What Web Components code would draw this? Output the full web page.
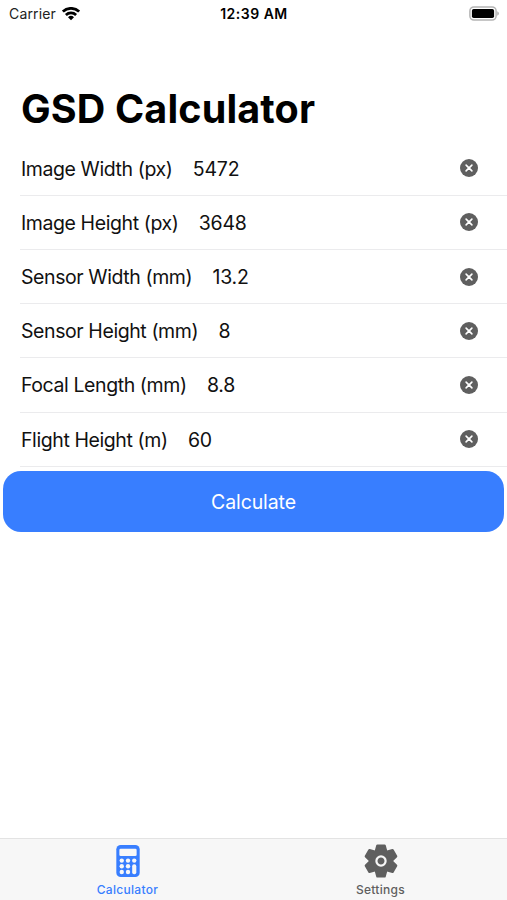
<!DOCTYPE html>
<html lang="en">
<head>
<meta charset="utf-8">
<title>GSD Calculator</title>
<style>
  html, body {
    height: 100%;
    margin: 0;
    overflow: hidden;
  }
  body {
    background: #fff;
    color: #000;
    font-family: Inter, "Liberation Sans", sans-serif;
  }
</style>
</head>
<body>

<gsd-app>
  <status-bar slot="status" carrier="Carrier" time="12:39 AM"></status-bar>
  <span slot="title">GSD Calculator</span>
  <number-field label="Image Width (px)" value="5472"></number-field>
  <number-field label="Image Height (px)" value="3648"></number-field>
  <number-field label="Sensor Width (mm)" value="13.2"></number-field>
  <number-field label="Sensor Height (mm)" value="8"></number-field>
  <number-field label="Focal Length (mm)" value="8.8"></number-field>
  <number-field label="Flight Height (m)" value="60"></number-field>
  <block-button>Calculate</block-button>
  <tab-button slot="tabs" selected>
    <svg slot="icon" viewBox="0 0 512 512" width="34" height="34">
      <rect fill="currentColor" x="80" y="14" width="352" height="484" rx="66"/>
      <g fill="#f7f7f7">
        <rect x="126" y="70" width="260" height="112" rx="20"/>
        <circle cx="162" cy="250" r="33"/><circle cx="256" cy="250" r="33"/><circle cx="350" cy="250" r="33"/>
        <circle cx="162" cy="336" r="33"/><circle cx="256" cy="336" r="33"/>
        <circle cx="162" cy="422" r="33"/><circle cx="256" cy="422" r="33"/>
        <rect x="319" y="306" width="62" height="149" rx="28"/>
      </g>
    </svg>
    Calculator
  </tab-button>
  <tab-button slot="tabs">
    <svg slot="icon" viewBox="-18 -18 36 36" width="36" height="36">
      <g fill="currentColor" stroke="currentColor" stroke-width="2.4" stroke-linejoin="round">
        <path d="M-3.6-15.4h7.2L5-10.2V10.2L3.6 15.4h-7.2L-5 10.2V-10.2z"/>
        <path transform="rotate(60)" d="M-3.6-15.4h7.2L5-10.2V10.2L3.6 15.4h-7.2L-5 10.2V-10.2z"/>
        <path transform="rotate(120)" d="M-3.6-15.4h7.2L5-10.2V10.2L3.6 15.4h-7.2L-5 10.2V-10.2z"/>
      </g>
      <circle r="4.6" fill="currentColor" stroke="#f7f7f7" stroke-width="2.2"/>
    </svg>
    Settings
  </tab-button>
</gsd-app>

<template id="gsd-app-template">
  <style>
    :host {
      display: flex;
      flex-direction: column;
      height: 100vh;
    }
    h1 {
      margin: 57px 0 0 21px;
      height: 57.6px;
      line-height: 50px;
      font-size: 39.5px;
      font-weight: 700;
      letter-spacing: 0.15px;
      white-space: nowrap;
    }
    main {
      flex: 1;
      display: flex;
      flex-direction: column;
    }
    nav {
      display: flex;
      box-sizing: border-box;
      height: 62px;
      padding-left: 1px;
      border-top: 1px solid #e3e3e3;
      background: #f7f7f7;
    }
  </style>
  <slot name="status"></slot>
  <h1><slot name="title"></slot></h1>
  <main><slot></slot></main>
  <nav><slot name="tabs"></slot></nav>
</template>

<template id="status-bar-template">
  <style>
    :host {
      display: grid;
      grid-template-columns: 1fr auto 1fr;
      align-items: center;
      height: 27px;
      padding: 0 8px 0 9px;
      font-size: 14px;
    }
    .left {
      display: flex;
      align-items: center;
      gap: 6px;
      color: #222;
    }
    .carrier {
      letter-spacing: 0.15px;
    }
    .time {
      font-weight: 600;
      letter-spacing: 0.5px;
    }
    .battery {
      justify-self: end;
    }
    svg {
      display: block;
    }
  </style>
  <div class="left">
    <span class="carrier"></span>
    <svg width="18" height="14" viewBox="0 0 18 14">
      <path fill="none" stroke="#000" stroke-width="2.7" d="M.9 4.6a11.6 11.6 0 0116.2 0M3.9 8a7.3 7.3 0 0110.2 0"/>
      <path d="M9 13.3L6 10.3a4.3 4.3 0 016 0z"/>
    </svg>
  </div>
  <span class="time"></span>
  <svg class="battery" width="30" height="15" viewBox="0 0 30 15">
    <rect x=".9" y=".9" width="26.2" height="13.2" rx="4" fill="#fff" stroke="#b4b4b4" stroke-width="1.5"/>
    <rect x="2.9" y="3" width="22.2" height="9" rx="1.8"/>
    <path fill="#b4b4b4" d="M28.2 5.2q1.8 .8 1.8 2.3t-1.8 2.3z"/>
  </svg>
</template>

<template id="number-field-template">
  <style>
    :host {
      display: flex;
      align-items: center;
      box-sizing: border-box;
      height: 54.2px;
      margin-left: 20px;
      padding: 0 29px 0 1px;
      border-bottom: 1.4px solid #ebebed;
      font-size: 19.5px;
      color: #111;
    }
    .label {
      padding-top: 1px;
      margin-right: 20.3px;
      letter-spacing: -0.41px;
      white-space: nowrap;
    }
    .value {
      flex: 1;
      padding-top: 1px;
      letter-spacing: -0.2px;
    }
    svg {
      display: block;
    }
  </style>
  <span class="label"></span>
  <span class="value"></span>
  <svg width="18" height="18" viewBox="0 0 18 18">
    <circle cx="9" cy="9" r="9" fill="#5f5f5f"/>
    <path stroke="#fff" stroke-width="1.6" stroke-linecap="round" d="M6.1 6.1l5.8 5.8M11.9 6.1l-5.8 5.8"/>
  </svg>
</template>

<template id="block-button-template">
  <style>
    :host {
      display: block;
      margin: 4.3px 3px 0;
    }
    button {
      display: block;
      width: 100%;
      height: 61px;
      padding: 1px 0 0;
      border: 0;
      border-radius: 18px;
      background: #387eff;
      color: #fff;
      font: inherit;
      font-size: 19.5px;
      letter-spacing: -0.1px;
    }
  </style>
  <button><slot></slot></button>
</template>

<template id="tab-button-template">
  <style>
    :host {
      flex: 1;
      display: flex;
      flex-direction: column;
      align-items: center;
      color: #5f5f5f;
      font-size: 12px;
      font-weight: 500;
      letter-spacing: 0.3px;
    }
    :host([selected]) {
      color: #387eff;
    }
    .icon {
      display: flex;
      align-items: center;
      height: 36px;
      margin: 4px 0 3px;
    }
  </style>
  <div class="icon"><slot name="icon"></slot></div>
  <span><slot></slot></span>
</template>

<script>
(function(){

  class TemplateElement extends HTMLElement {
    constructor() {
      super();
      const tmpl = document.getElementById(this.localName + "-template");
      this.attachShadow({ mode: "open" });
      this.shadowRoot.appendChild(document.importNode(tmpl.content, true));
    }

    // copies an attribute into the element that has the class of the same name
    fill(...names) {
      names.forEach(name => {
        this.shadowRoot.querySelector("." + name).textContent = this.getAttribute(name);
      });
    }
  }

  customElements.define("gsd-app", class GsdApp extends TemplateElement {});

  customElements.define("status-bar", class StatusBar extends TemplateElement {
    connectedCallback() {
      this.fill("carrier", "time");
    }
  });

  customElements.define("number-field", class NumberField extends TemplateElement {
    connectedCallback() {
      this.fill("label", "value");
      this.shadowRoot.querySelector("svg").addEventListener("click", () => {
        this.setAttribute("value", "");
        this.fill("value");
      });
    }
  });

  customElements.define("block-button", class BlockButton extends TemplateElement {});

  customElements.define("tab-button", class TabButton extends TemplateElement {});

})();
</script>
</body>
</html>
